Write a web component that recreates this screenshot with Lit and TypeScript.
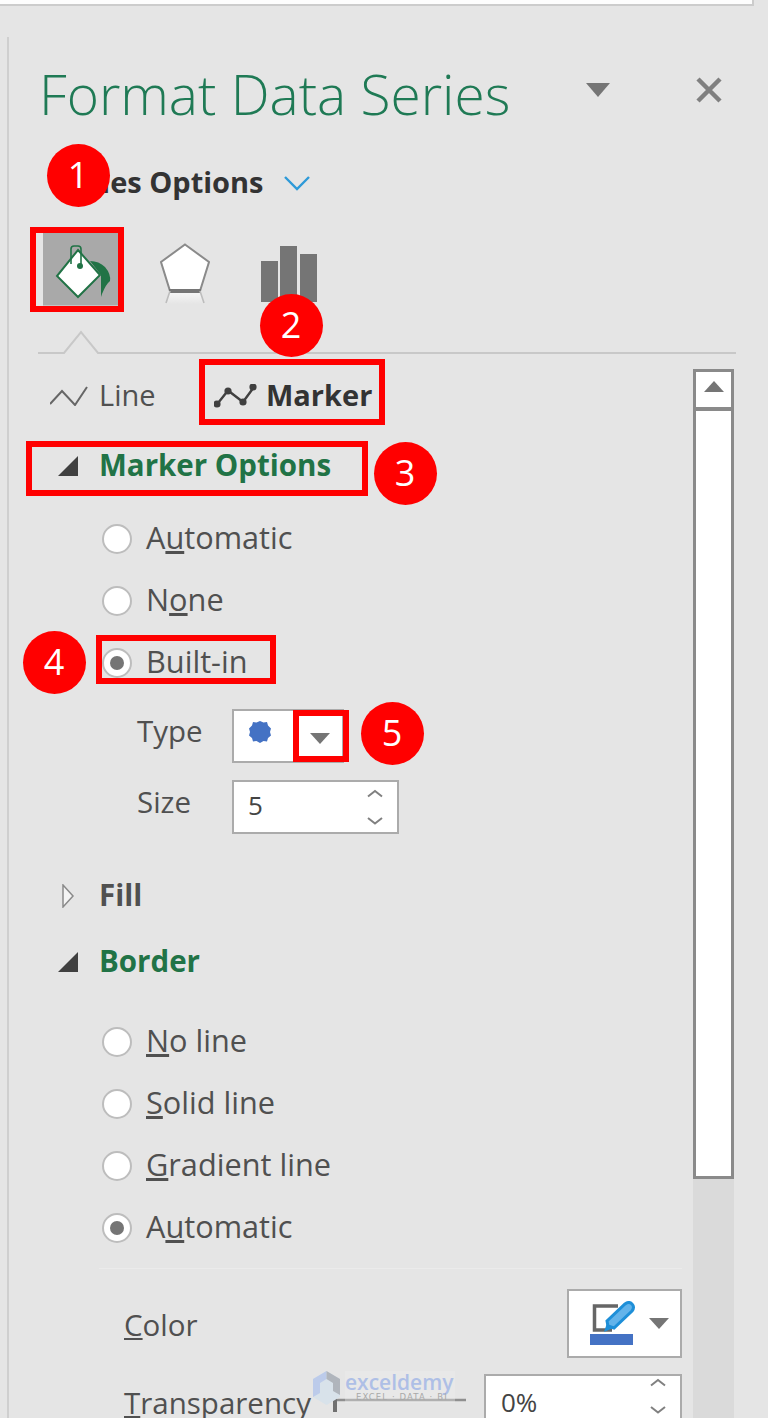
import { LitElement, html, css, svg } from "lit";
import { customElement } from "lit/decorators.js";

const BOXES = [
  { x: 30, y: 227, w: 94, h: 85 },
  { x: 199, y: 359, w: 186, h: 66 },
  { x: 26, y: 441, w: 342, h: 55 },
  { x: 96, y: 635, w: 180, h: 49 },
  { x: 293, y: 710, w: 56, h: 52 },
];
const BADGES = [
  { x: 78, y: 175, n: 1 },
  { x: 291, y: 325, n: 2 },
  { x: 405, y: 473, n: 3 },
  { x: 54, y: 662, n: 4 },
  { x: 392, y: 733, n: 5 },
];

@customElement("app-root")
export class AppRoot extends LitElement {
  static styles = css`
    :host {
      display: block;
      position: relative;
      width: 768px;
      height: 1418px;
      overflow: hidden;
      background: #e5e5e5;
      font-family: "Open Sans", "Noto Sans", sans-serif;
      color: #505050;
    }
    svg { display: block; flex: none; }
    .strip {
      height: 4px;
      margin-right: 14px;
      background: #fdfdfd;
      border: solid #cccccc;
      border-width: 0 2px 2px 0;
    }
    .panel {
      margin: 31px 0 0 7px;
      height: 1381px;
      border-left: 2px solid #cfcfcf;
      overflow: hidden;
    }
    .titlebar {
      height: 60px;
      margin-top: 28px;
      padding-left: 30px;
      display: flex;
      align-items: center;
    }
    .title {
      flex: 1;
      font-size: 55px;
      font-weight: 300;
      color: #1f7a55;
      white-space: nowrap;
      line-height: 60px;
      margin-bottom: 3px;
    }
    .title-arrow { margin-right: 86px; margin-top: -10px; }
    .title-x { margin-right: 46px; margin-top: -10px; }
    .series {
      height: 40px;
      margin-top: 38px;
      padding-left: 46px;
      display: flex;
      align-items: center;
      gap: 20px;
      font-size: 29px;
      font-weight: 700;
      color: #333333;
    }
    .series span { margin-bottom: 4px; }
    .tiles {
      margin-top: 30px;
      height: 72px;
      padding-left: 34px;
      display: flex;
      align-items: flex-start;
    }
    .tile {
      width: 75px;
      height: 72px;
      background: #a9a9a9;
      box-shadow: 0 3px 0 #c4c4c4;
    }
    .pent { margin: 10px 0 0 42px; }
    .bars { margin: 13px 0 0 51px; }
    .pointer { margin: 25px 0 0 29px; }
    .body { display: flex; height: 1065px; }
    .content { width: 684px; padding-right: 11px; box-sizing: border-box; flex: none; }
    .tabs {
      margin-top: 12px;
      height: 60px;
      padding-left: 41px;
      display: flex;
      align-items: center;
      font-size: 29px;
    }
    .tab { display: flex; align-items: center; gap: 11px; }
    .tab span { margin-bottom: 4px; }
    .tab-line { width: 164px; }
    .tab-marker { gap: 8px; font-weight: 700; color: #333333; }
    .sec {
      height: 60px;
      padding-left: 49px;
      display: flex;
      align-items: center;
      font-size: 29.5px;
      font-weight: 700;
      color: #505050;
    }
    .sec > span:last-child { margin-bottom: 4px; margin-left: -1px; }
    .sec.open { color: #217346; }
    .sec .tri { width: 42px; }
    .sec-marker { margin-top: 10px; }
    .radios { padding-left: 93px; }
    .radios.a { margin-top: 12px; }
    .radios.b { margin-top: 19px; }
    .radio {
      height: 62px;
      display: flex;
      align-items: center;
      gap: 14px;
      font-size: 30.7px;
    }
    .radio > span:last-child { margin-bottom: 4px; }
    .circle {
      width: 30px;
      height: 30px;
      box-sizing: border-box;
      border-radius: 50%;
      background: #ffffff;
      border: 2px solid #bdbdbd;
      display: flex;
      align-items: center;
      justify-content: center;
      flex: none;
    }
    .circle i { width: 14px; height: 14px; border-radius: 50%; background: #757575; }
    .field {
      display: flex;
      align-items: center;
      padding-left: 128px;
      font-size: 29.5px;
    }
    .field .lbl { width: 95px; padding-bottom: 12px; }
    .field-type { margin-top: 15px; }
    .field-size { margin-top: 17px; }
    .input {
      box-sizing: border-box;
      height: 54px;
      background: #ffffff;
      border: 2px solid #ababab;
      display: flex;
      align-items: center;
    }
    .input-type { width: 112px; padding: 0 12px 0 14px; justify-content: space-between; }
    .input-type .dot { margin-bottom: 8px; }
    .input-type .caret { margin-top: 4px; }
    .input-size { width: 167px; padding: 0 14px; justify-content: space-between; font-size: 26px; color: #444444; }
    .input-size span { margin-bottom: 4px; }
    .sec-fill { margin-top: 32px; }
    .sec-border { margin-top: 6px; }
    .sep { margin: 9px 0 0 90px; height: 1px; background: #ebebeb; }
    .color-row {
      margin-top: 20px;
      padding-left: 115px;
      display: flex;
      align-items: center;
      justify-content: space-between;
      font-size: 29.5px;
    }
    .color-row > span { margin-top: 2px; }
    .color-btn {
      box-sizing: border-box;
      width: 115px;
      height: 69px;
      background: #ffffff;
      border: 2px solid #ababab;
      padding-left: 19px;
      display: flex;
      align-items: center;
    }
    .trans-row {
      margin-top: 16px;
      padding-left: 115px;
      display: flex;
      align-items: flex-start;
      font-size: 29.5px;
    }
    .trans-lbl { width: 209px; padding-top: 8px; white-space: nowrap; }
    .slider { margin-top: 12px; }
    .input-pct {
      box-sizing: border-box;
      width: 198px;
      height: 62px;
      margin-left: 18px;
      padding: 0 14px 0 15px;
      background: #ffffff;
      border: 2px solid #ababab;
      border-bottom: 0;
      display: flex;
      align-items: flex-start;
      justify-content: space-between;
      font-size: 26px;
      color: #444444;
    }
    .input-pct span { margin-top: 8px; }
    .scroll {
      width: 41px;
      margin-top: 15px;
      background: #dadada;
      flex: none;
      height: 1050px;
    }
    .scroll-up, .scroll-thumb {
      box-sizing: border-box;
      background: #ffffff;
      border: 3px solid #8a8a8a;
      display: flex;
      align-items: center;
      justify-content: center;
    }
    .scroll-up { height: 41px; padding-bottom: 6px; }
    .scroll-thumb { height: 770px; border-top-width: 2px; margin-top: -1px; }
    .box {
      position: absolute;
      box-sizing: border-box;
      border: 6px solid #ff0000;
    }
    .badge {
      position: absolute;
      width: 63px;
      height: 63px;
      border-radius: 50%;
      background: #ff0000;
      color: #ffffff;
      font-size: 36px;
      display: flex;
      align-items: center;
      justify-content: center;
      line-height: 1;
    }
    .mark {
      position: absolute;
      left: 313px;
      top: 1371px;
      width: 142px;
      height: 34px;
      display: flex;
      gap: 5px;
      box-sizing: border-box;
    }
    .mark-text {
      display: flex;
      flex-direction: column;
      white-space: nowrap;
      padding-top: 1px;
      height: 31px;
      flex: 1;
      background: rgba(238, 238, 238, 0.35);
    }
    .mark-name { font-size: 21px; font-weight: 600; color: #aebfe6; line-height: 21px; }
    .mark-sub { font-size: 8.5px; letter-spacing: 1.1px; color: #a8a8a8; font-family: "DejaVu Sans", sans-serif; padding-left: 11px; line-height: 9px; }
  `;

  private radio(label: unknown, on = false) {
    return html`<div class="radio"><span class="circle">${on ? html`<i></i>` : ""}</span><span>${label}</span></div>`;
  }

  private openTri() {
    return html`<span class="tri"><svg width="20" height="20" viewBox="0 0 20 20"><path d="M0 20H20V0Z" fill="#404040"/></svg></span>`;
  }

  private spinner() {
    return html`<svg width="16" height="40" viewBox="0 0 16 40" fill="none" stroke="#808080" stroke-width="2"><path d="M1 9.500 8 4l7 5.500"/><path d="M1 31l7 5.500 7-5.500"/></svg>`;
  }

  private caret() {
    return svg`<svg class="caret" width="20" height="11" viewBox="0 0 20 11"><path d="M0 0H20L10 11Z" fill="#757575"/></svg>`;
  }

  render() {
    return html`
      <div class="strip"></div>
      <div class="panel">
        <div class="titlebar">
          <div class="title">Format Data Series</div>
          <svg class="title-arrow" width="24" height="14" viewBox="0 0 24 14"><path d="M0 0H24L12 14Z" fill="#757575"/></svg>
          <svg class="title-x" width="26" height="26" viewBox="0 0 26 26"><path d="M2 2 24 24M24 2 2 24" stroke="#808080" stroke-width="4.5"/></svg>
        </div>
        <div class="series">
          <span>Series Options</span>
          <svg width="26" height="15" viewBox="0 0 26 15" fill="none"><path d="M1 1 13 13 25 1" stroke="#2e9ad8" stroke-width="2.4"/></svg>
        </div>
        <div class="tiles">
          <div class="tile">
            <svg width="75" height="72" viewBox="43 233 75 72">
              <path d="M78 250 100 275 78 297 57 276Z" fill="#fff" stroke="#217346" stroke-width="2"/>
              <path d="M71 264V249q0-3 3-3h4q3 0 3 3v17" fill="none" stroke="#217346" stroke-width="1.6"/>
              <circle cx="80" cy="266" r="3" fill="#217346"/>
              <path d="M90 261q9 0 15 6 6 7 5 14-4 3-8 13l-1 3q0-10 0-22Z" fill="#217346"/>
            </svg>
          </div>
          <svg class="pent" width="50" height="62" viewBox="160 243 50 62">
            <defs><linearGradient id="fade" x1="0" y1="0" x2="0" y2="1"><stop offset="0" stop-color="#f8f8f8"/><stop offset="1" stop-color="#e5e5e5"/></linearGradient></defs>
            <path d="M185 244.500 209 262 200 291H170L161 262Z" fill="#fff" stroke="#8a8a8a" stroke-width="2"/>
            <path d="M170 291H200L204 304H166Z" fill="url(#fade)"/>
            <path d="M169 291H201" stroke="#757575" stroke-width="4"/>
            <path d="M170 291 166 303M200 291 204 303" stroke="#bdbdbd" stroke-width="1.6"/>
          </svg>
          <svg class="bars" width="56" height="56" viewBox="261 246 56 56" fill="#757575">
            <rect x="261" y="261" width="17" height="41"/>
            <rect x="280" y="246" width="17" height="56"/>
            <rect x="300" y="254" width="17" height="48"/>
          </svg>
        </div>
        <svg class="pointer" width="698" height="24" viewBox="0 0 698 24" fill="none"><path d="M0 23H26L43 2 60 23H698" stroke="#c8c8c8" stroke-width="2"/></svg>
        <div class="body">
          <div class="content">
            <div class="tabs">
              <div class="tab tab-line">
                <svg width="38" height="20" viewBox="50 383 38 20" fill="none"><path d="M50 401 62 388 75 402 87 384" stroke="#666" stroke-width="2"/></svg>
                <span>Line</span>
              </div>
              <div class="tab tab-marker">
                <svg width="44" height="24" viewBox="214 381 44 24" fill="#404040">
                  <path d="M216.500 402 228 387.500 243 399 254 384" fill="none" stroke="#404040" stroke-width="2.400"/>
                  <circle cx="217" cy="401" r="3.600"/><circle cx="228" cy="388" r="3.600"/><circle cx="243" cy="399" r="3.600"/><circle cx="253" cy="384" r="3.600"/>
                </svg>
                <span>Marker</span>
              </div>
            </div>
            <div class="sec open sec-marker">${this.openTri()}<span>Marker Options</span></div>
            <div class="radios a">
              ${this.radio(html`A<u>u</u>tomatic`)}
              ${this.radio(html`N<u>o</u>ne`)}
              ${this.radio("Built-in", true)}
            </div>
            <div class="field field-type">
              <span class="lbl">Type</span>
              <div class="input input-type">
                <svg class="dot" width="24" height="24" viewBox="0 0 24 24"><path d="M12 1l3.500 1.500L19 2l1 3.500L23 8.500 22 12l1 3.500L20 18l-1 3.500-3.500-.5L12 23l-3.500-2-3.500.5L4 18 1 15.500 2 12 1 8.500 4 5.500 5 2l3.500.5Z" fill="#4472c4"/></svg>
                ${this.caret()}
              </div>
            </div>
            <div class="field field-size">
              <span class="lbl">Size</span>
              <div class="input input-size"><span>5</span>${this.spinner()}</div>
            </div>
            <div class="sec sec-fill">
              <span class="tri"><svg width="20" height="24" viewBox="0 0 20 24"><path d="M5 1V23L15 12Z" fill="#f4f4f4" stroke="#8a8a8a" stroke-width="1.500"/></svg></span>
              <span>Fill</span>
            </div>
            <div class="sec open sec-border">${this.openTri()}<span>Border</span></div>
            <div class="radios b">
              ${this.radio(html`<u>N</u>o line`)}
              ${this.radio(html`<u>S</u>olid line`)}
              ${this.radio(html`<u>G</u>radient line`)}
              ${this.radio(html`A<u>u</u>tomatic`, true)}
            </div>
            <div class="sep"></div>
            <div class="color-row">
              <span><u>C</u>olor</span>
              <div class="color-btn">
                <svg width="84" height="46" viewBox="0 0 84 46">
                  <path d="M24 29H6.500V5H30" fill="none" stroke="#666" stroke-width="3.500"/>
                  <rect x="2" y="33" width="43" height="11" fill="#4472c4"/>
                  <path d="M20 25l-1-5L37 3q4-3 7 0t0 7L26 27Z" fill="#63b3ea" stroke="#1e8fd8" stroke-width="3"/>
                  <path d="M16 31l3-9 6 5Z" fill="#1e8fd8"/>
                  <g transform="translate(61 17)"><path d="M0 0H20L10 11Z" fill="#757575"/></g>
                </svg>
              </div>
            </div>
            <div class="trans-row">
              <span class="trans-lbl"><u>T</u>ransparency</span>
              <svg class="slider" width="133" height="28" viewBox="0 0 133 28"><path d="M2 14H133" stroke="#8f8f8f" stroke-width="2.500"/><path d="M2 0V26" stroke="#707070" stroke-width="4"/></svg>
              <div class="input-pct"><span>0%</span>${this.spinner()}</div>
            </div>
          </div>
          <div class="scroll">
            <div class="scroll-up"><svg width="20" height="11" viewBox="0 0 20 11"><path d="M0 11H20L10 0Z" fill="#757575"/></svg></div>
            <div class="scroll-thumb"></div>
          </div>
        </div>
      </div>
      ${BOXES.map((b) => html`<div class="box" style="left:${b.x}px;top:${b.y}px;width:${b.w}px;height:${b.h}px"></div>`)}
      ${BADGES.map((b) => html`<div class="badge" style="left:${b.x - 31.5}px;top:${b.y - 31.5}px">${b.n}</div>`)}
      <div class="mark">
        <svg width="27" height="34" viewBox="0 0 27 34">
          <path d="M13.500 0 27 8V26L13.500 34 0 26V8Z" fill="#d8e2ea"/>
          <path d="M13.500 0 0 8V26L7 22V12L13.500 8Z" fill="#bccbea"/>
          <path d="M13.500 0 27 8V24L20 20V12L13.500 8Z" fill="#b0b5bc"/>
        </svg>
        <div class="mark-text"><span class="mark-name">exceldemy</span><span class="mark-sub">EXCEL · DATA · BI</span></div>
      </div>
    `;
  }
}
